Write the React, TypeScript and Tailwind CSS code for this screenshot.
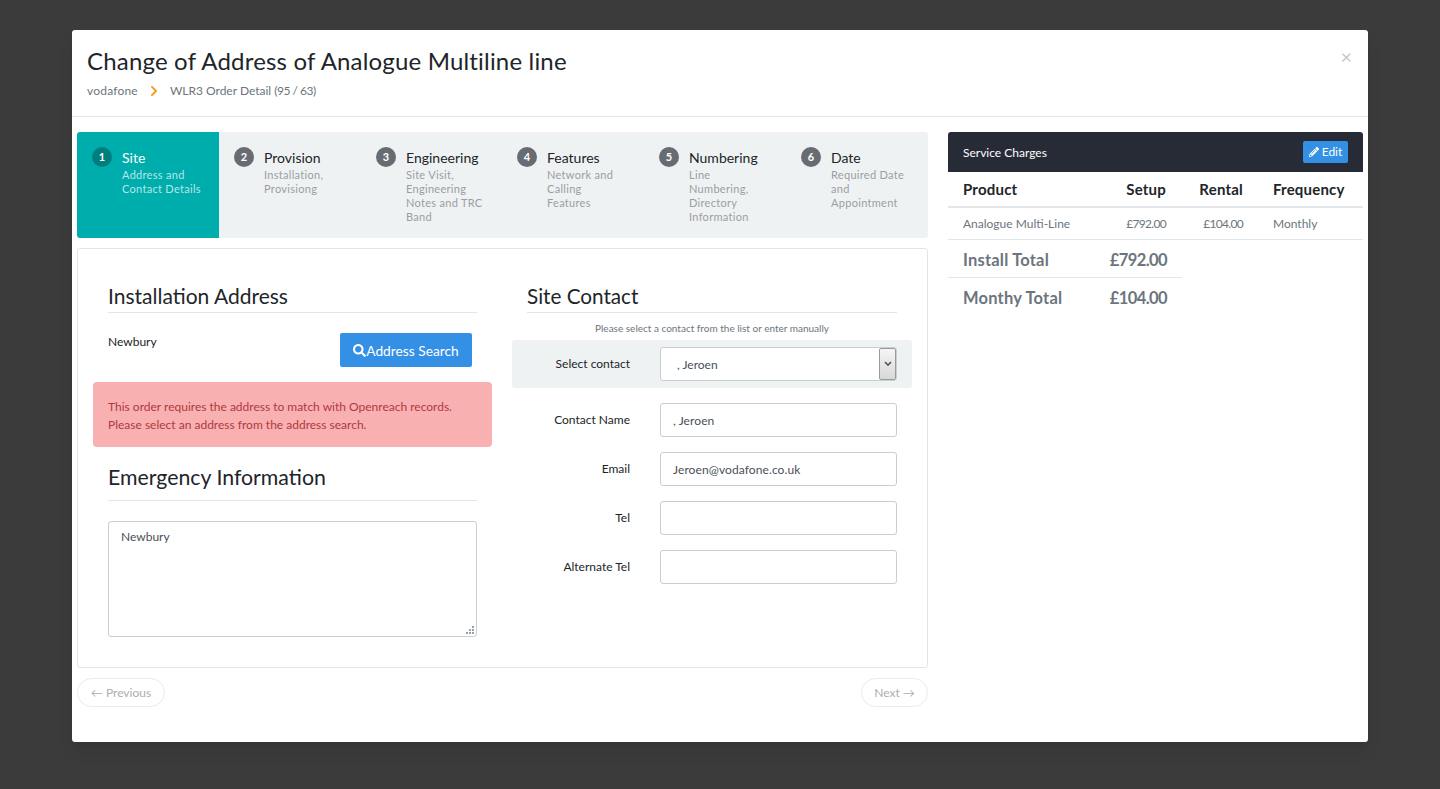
import { FaPencilAlt, FaSearch, FaChevronRight } from 'react-icons/fa';

const font = "font-['Lato','Open_Sans',sans-serif]";

const steps = [
  { n: 1, title: 'Site', lines: ['Address and', 'Contact Details'], w: 'w-[142px]' },
  { n: 2, title: 'Provision', lines: ['Installation,', 'Provisiong'], w: 'w-[142px]' },
  { n: 3, title: 'Engineering', lines: ['Site Visit,', 'Engineering', 'Notes and TRC', 'Band'], w: 'w-[141px]' },
  { n: 4, title: 'Features', lines: ['Network and', 'Calling', 'Features'], w: 'w-[142px]' },
  { n: 5, title: 'Numbering', lines: ['Line', 'Numbering,', 'Directory', 'Information'], w: 'w-[142px]' },
  { n: 6, title: 'Date', lines: ['Required Date', 'and', 'Appointment'], w: 'w-[142px]' },
];

function Field({ label, value }: { label: string; value?: string }) {
  return (
    <div className="flex items-start mb-[15px]">
      <label className="w-[118px] text-right text-[12px] leading-[20px] pt-[7px] text-[#212529]">{label}</label>
      <div className="ml-[30px] w-[237px] h-[34px] border border-[#c9cdd4] rounded-[3px] px-3 text-[12px] tracking-[0.1px] leading-[34px] text-[#495057]">
        {value}
      </div>
    </div>
  );
}

export default function App() {
  return (
    <div className={`min-h-screen h-[789px] bg-[#3b3b3b] px-[72px] pt-[30px] overflow-hidden ${font}`}>
      <div className="relative bg-white h-[712px] rounded-[3px] shadow-lg">
        <button className="absolute right-[16px] top-[16px] text-[20px] leading-[20px] text-[#c4c8cc]">×</button>
        <div className="h-[87px] border-b border-[#e2e7ec] pl-[15px] pt-[14px]">
          <h1 className="text-[24px] leading-[34px] tracking-[0.18px] text-[#212529]">Change of Address of Analogue Multiline line</h1>
          <div className="flex items-center mt-[4px] text-[12px] leading-[18px] text-[#6c757d]">
            <span className="tracking-[0.2px]">vodafone</span>
            <FaChevronRight className="ml-[10px] mr-[10px] text-[#f59c1a]" size={12} />
            <span>
              WLR3 Order Detail <span className="tracking-[-0.5px]">(95 / 63)</span>
            </span>
          </div>
        </div>

        <div className="flex pt-[15px] pl-[5px] pr-[5px] gap-[20px]">
          <div className="w-[851px]">
            <div className="flex h-[106px] bg-[#eff2f3] rounded-[3px] overflow-hidden">
              {steps.map((s) => {
                const active = s.n === 1;
                return (
                  <div key={s.n} className={`${s.w} flex pl-[15px] pt-[15px] ${active ? 'bg-[#00adad]' : ''}`}>
                    <span
                      className={`w-5 h-5 shrink-0 rounded-full flex items-center justify-center text-[11px] font-bold text-white ${
                        active ? 'bg-[#007e7e]' : 'bg-[#676c72]'
                      }`}
                    >
                      {s.n}
                    </span>
                    <div className="ml-[10px]">
                      <div className={`text-[14px] leading-[21px] ${active ? 'text-white' : 'text-[#212529]'}`}>{s.title}</div>
                      {s.lines.map((l) => (
                        <div key={l} className={`text-[11px] leading-[14px] tracking-[0.3px] ${active ? 'text-[#b5e6e6]' : 'text-[#9a9ea3]'}`}>
                          {l}
                        </div>
                      ))}
                    </div>
                  </div>
                );
              })}
            </div>

            <div className="mt-[10px] h-[420px] border border-[#e2e5e8] rounded-[3px] flex px-[15px] gap-[20px]">
              <div className="w-[399px]">
                <div className="px-[15px] pt-[30px]">
                  <h3 className="text-[21px] leading-[33px] text-[#212529] border-b border-[#e2e7ec]">Installation Address</h3>
                  <div className="flex justify-between pt-[20px] pr-[5px]">
                    <span className="text-[12px] leading-[18px] text-[#212529]">Newbury</span>
                    <button className="flex items-center justify-center w-[132px] h-[34px] bg-[#3490e5] rounded-[2px] text-white text-[13.75px]">
                      <FaSearch size={13} />
                      <span className="pt-[2px]">Address Search</span>
                    </button>
                  </div>
                </div>
                <div className="mt-[15px] h-[65px] bg-[#f9b0b0] rounded-[4px] px-[15px] pt-[16px] text-[12px] leading-[18px] text-[#b0393f]">
                  This order requires the address to match with Openreach records.
                  <br />
                  Please select an address from the address search.
                </div>
                <div className="px-[15px] pt-[14px]">
                  <h3 className="text-[21.3px] leading-[33px] text-[#212529] border-b border-[#e2e7ec] pb-[6px]">Emergency Information</h3>
                  <div className="relative mt-[20px]">
                    <textarea
                      className="w-full h-[116px] border border-[#c9cdd4] rounded-[3px] px-3 py-[6px] text-[12px] leading-[18px] text-[#495057] block resize-none"
                      defaultValue="Newbury"
                    />
                    <svg className="absolute right-[3px] bottom-[3px]" width="8" height="8" viewBox="0 0 8 8" fill="#9aa0a6">
                      <rect x="6" y="0" width="2" height="2" />
                      <rect x="3" y="3" width="2" height="2" />
                      <rect x="6" y="3" width="2" height="2" />
                      <rect x="0" y="6" width="2" height="2" />
                      <rect x="3" y="6" width="2" height="2" />
                      <rect x="6" y="6" width="2" height="2" />
                    </svg>
                  </div>
                </div>
              </div>

              <div className="w-[400px]">
                <div className="px-[15px] pt-[30px]">
                  <h3 className="text-[20.7px] leading-[34px] h-[34px] text-[#212529] border-b border-[#e2e7ec]">Site Contact</h3>
                </div>
                <p className="text-center text-[10px] leading-[14px] text-[#6c757d] pt-[8px] pb-[5px]">Please select a contact from the list or enter manually</p>
                <div className="h-[48px] bg-[#eff2f3] rounded-[3px] flex items-center">
                  <label className="w-[118px] text-right text-[12px] text-[#212529]">Select contact</label>
                  <div className="ml-[30px] w-[237px] h-[34px] bg-white border border-[#c9cdd4] rounded-[3px] flex items-center justify-between pl-4 text-[12px] text-[#495057]">
                    <span className="pt-[1px]">, Jeroen</span>
                    <span className="w-[17px] h-[32px] border border-[#9a9a9a] rounded-[2px] bg-gradient-to-b from-[#f5f5f5] to-[#d8d8d8] flex items-center justify-center">
                      <svg width="8" height="6" viewBox="0 0 8 6"><path d="M1 1l3 3 3-3" fill="none" stroke="#555" strokeWidth="1.6" /></svg>
                    </span>
                  </div>
                </div>
                <div className="pt-[15px]">
                  <Field label="Contact Name" value=", Jeroen" />
                  <Field label="Email" value="Jeroen@vodafone.co.uk" />
                  <Field label="Tel" />
                  <Field label="Alternate Tel" />
                </div>
              </div>
            </div>

            <div className="flex justify-between mt-[10px]">
              <button className="h-[29px] w-[88px] border border-[#e8eaec] rounded-full text-[12px] text-[#a9aeb3]">← Previous</button>
              <button className="h-[29px] w-[67px] border border-[#e8eaec] rounded-full text-[12px] text-[#a9aeb3]">Next →</button>
            </div>
          </div>

          <div className="w-[415px]">
            <div className="h-[40px] bg-[#272b35] rounded-t-[3px] flex items-center justify-between pl-[15px] pr-[15px]">
              <span className="text-white text-[12px] pt-[2px]">Service Charges</span>
              <button className="h-[22px] w-[45px] bg-[#3490e5] rounded-[2px] text-white text-[12px] flex items-center justify-center gap-[3px]">
                <FaPencilAlt size={10} />
                Edit
              </button>
            </div>
            <div className="flex h-[36px] items-center border-b-2 border-[#e2e7ec] pt-[1px] text-[15px] tracking-[0.2px] font-bold text-[#212529]">
              <div className="w-[153px] pl-[15px]">Product</div>
              <div className="w-[65px] text-right">Setup</div>
              <div className="w-[77px] text-right">Rental</div>
              <div className="pl-[30px]">Frequency</div>
            </div>
            <div className="flex h-[32px] items-center border-b border-[#e2e7ec] text-[12px] text-[#6c757d]">
              <div className="w-[153px] pl-[15px]">Analogue Multi-Line</div>
              <div className="w-[65px] text-right tracking-[-0.7px]">£792.00</div>
              <div className="w-[77px] text-right tracking-[-0.7px]">£104.00</div>
              <div className="pl-[30px]">Monthly</div>
            </div>
            <div className="w-[234px] flex justify-between items-center h-[38px] border-b border-[#e2e7ec] pt-[3px] pl-[15px] pr-[15px] text-[16.5px] tracking-[0.2px] font-bold text-[#6c757d]">
              <span>Install Total</span>
              <span className="tracking-[-0.6px]">£792.00</span>
            </div>
            <div className="w-[234px] flex justify-between items-center h-[38px] pt-[2px] pl-[15px] pr-[15px] text-[16.5px] tracking-[0.2px] font-bold text-[#6c757d]">
              <span>Monthy Total</span>
              <span className="tracking-[-0.6px]">£104.00</span>
            </div>
          </div>
        </div>
      </div>
    </div>
  );
}
